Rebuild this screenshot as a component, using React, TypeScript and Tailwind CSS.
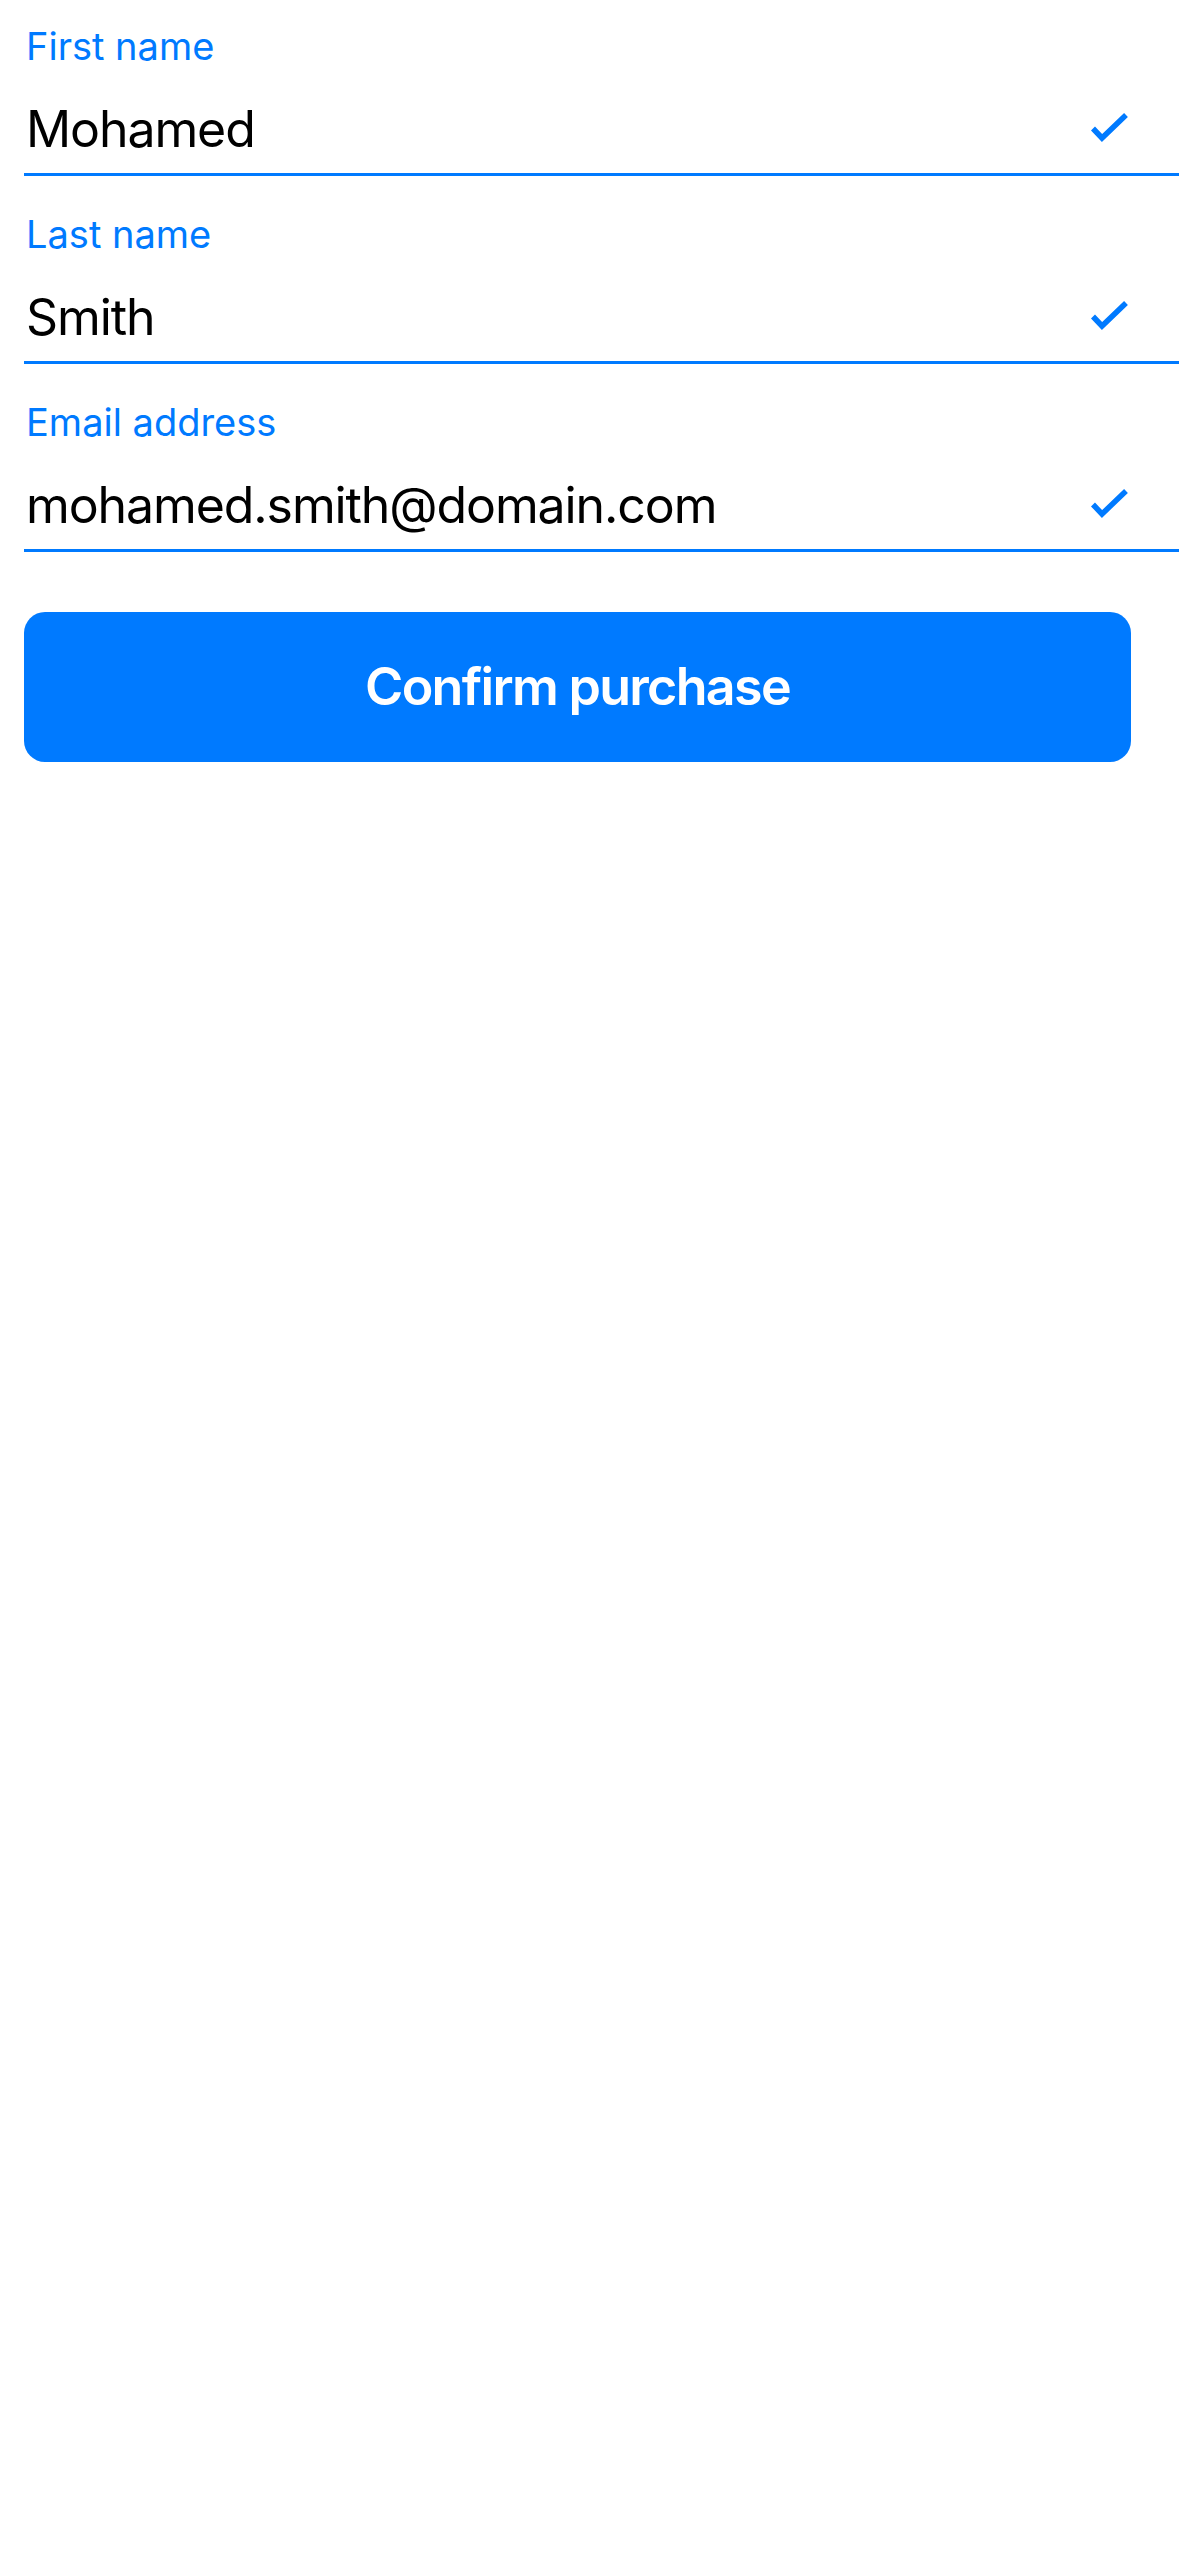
import React from "react";

function Check() {
  return (
    <svg width="44" height="36" viewBox="0 0 44 36" className="shrink-0 mr-[47px]">
      <path d="M5 16.5 L14 26 L38 3" fill="none" stroke="#007AFF" strokeWidth="5.5" strokeLinecap="butt" strokeLinejoin="miter" />
    </svg>
  );
}

function Field({ label, value, first }: { label: string; value: string; first?: boolean }) {
  return (
    <div className={first ? "pt-[23px]" : "pt-[35px]"}>
      <div className="text-[38px] leading-[47px] text-[#007AFF] pl-[2px]">{label}</div>
      <div className="mt-[16px] h-[90px] border-b-[3px] border-[#007AFF] flex items-center justify-between">
        <span className="text-[50px] leading-[87px] tracking-[-1.1px] text-black pl-[2px]">{value}</span>
        <Check />
      </div>
    </div>
  );
}

export default function App() {
  return (
    <div className="w-[1179px] min-h-[2556px] bg-white" style={{ fontFamily: "Inter, 'Noto Sans', sans-serif" }}>
      <div className="pl-[24px]">
        <Field label="First name" value="Mohamed" first />
        <Field label="Last name" value="Smith" />
        <Field label="Email address" value="mohamed.smith@domain.com" />
      </div>
      <div className="pl-[24px] pr-[48px] mt-[60px]">
        <button className="w-full h-[150px] rounded-[21px] bg-[#007AFF] text-white text-[52px] tracking-[-1.7px] font-semibold flex items-center justify-center">
          Confirm purchase
        </button>
      </div>
    </div>
  );
}
